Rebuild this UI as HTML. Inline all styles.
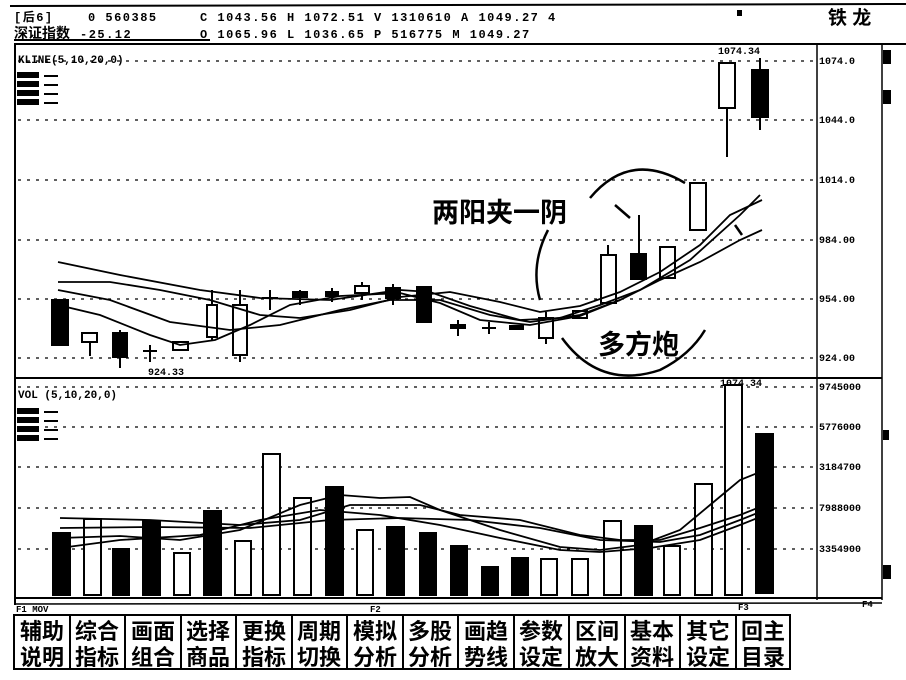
<!DOCTYPE html>
<html><head><meta charset="utf-8"><style>
html,body{margin:0;padding:0;background:#fff;}
svg{display:block}
text{font-family:"Liberation Mono","Noto Sans CJK SC",monospace;font-weight:bold;fill:#000}
.c{font-family:"Liberation Sans","Noto Sans CJK SC",sans-serif;font-weight:bold}
</style></head><body>
<svg width="906" height="680" viewBox="0 0 906 680" xmlns="http://www.w3.org/2000/svg">
<rect width="906" height="680" fill="#fff"/>
<!-- header -->
<line x1="10" y1="6" x2="906" y2="4" stroke="#000" stroke-width="2"/>
<g font-size="12" letter-spacing="1.5">
<text x="14" y="21">[后6]</text><text x="88" y="21">0 560385</text>
<text x="200" y="21">C 1043.56 H 1072.51 V 1310610 A 1049.27 4</text>
<text x="80" y="38">-25.12</text>
<text x="200" y="38">O 1065.96 L 1036.65 P  516775 M 1049.27</text>
</g>
<text x="14" y="38" font-size="14" class="c">深证指数</text>
<text x="828" y="24" font-size="19" class="c">铁 龙</text>
<rect x="737" y="10" width="5" height="6" fill="#000"/>
<line x1="14" y1="40" x2="210" y2="40" stroke="#000" stroke-width="2"/>
<!-- frame -->
<line x1="14" y1="44" x2="906" y2="44" stroke="#000" stroke-width="2"/>
<line x1="15" y1="44" x2="15" y2="605" stroke="#000" stroke-width="2"/>
<line x1="817" y1="44" x2="817" y2="600" stroke="#000" stroke-width="1.5"/>
<line x1="882" y1="44" x2="882" y2="600" stroke="#000" stroke-width="1.5"/>
<line x1="15" y1="378" x2="882" y2="378" stroke="#000" stroke-width="2"/>
<line x1="15" y1="598" x2="882" y2="598" stroke="#000" stroke-width="2"/>
<line x1="15" y1="604" x2="882" y2="603" stroke="#000" stroke-width="1.5"/>
<rect x="883" y="50" width="8" height="14" fill="#000"/>
<rect x="883" y="90" width="8" height="14" fill="#000"/>
<rect x="883" y="565" width="8" height="14" fill="#000"/>
<rect x="883" y="430" width="6" height="10" fill="#000"/>
<!-- grid -->
<g stroke="#000" stroke-width="1.2" stroke-dasharray="3,6">
<line x1="18" y1="61" x2="817" y2="61"/><line x1="18" y1="120" x2="817" y2="120"/>
<line x1="18" y1="180" x2="817" y2="180"/><line x1="18" y1="240" x2="817" y2="240"/>
<line x1="18" y1="299" x2="817" y2="299"/><line x1="18" y1="358" x2="817" y2="358"/>
<line x1="18" y1="387" x2="817" y2="387"/><line x1="18" y1="427" x2="817" y2="427"/>
<line x1="18" y1="467" x2="817" y2="467"/><line x1="18" y1="508" x2="817" y2="508"/>
<line x1="18" y1="549" x2="817" y2="549"/>
</g>
<g font-size="10">
<text x="819" y="64">1074.0</text><text x="819" y="123">1044.0</text>
<text x="819" y="183">1014.0</text><text x="819" y="243">984.00</text>
<text x="819" y="302">954.00</text><text x="819" y="361">924.00</text>
<text x="819" y="390">9745000</text><text x="819" y="430">5776000</text>
<text x="819" y="470">3184700</text><text x="819" y="511">7988000</text>
<text x="819" y="552">3354900</text>
<text x="718" y="54">1074.34</text><text x="720" y="386">1074.34</text>
<text x="148" y="375">924.33</text>
<text x="18" y="63" font-size="11">KLINE(5,10,20,0)</text>
<text x="18" y="398" font-size="11">VOL (5,10,20,0)</text>
<text x="16" y="612" font-size="9">F1 MOV</text>
</g>
<!-- legends -->
<g fill="#000">
<rect x="17" y="72" width="22" height="6"/><rect x="17" y="81" width="22" height="6"/><rect x="17" y="90" width="22" height="6"/><rect x="17" y="99" width="22" height="6"/>
<rect x="44" y="75" width="14" height="2"/><rect x="44" y="84" width="14" height="2"/><rect x="44" y="93" width="14" height="2"/><rect x="44" y="102" width="14" height="2"/>
<rect x="17" y="408" width="22" height="6"/><rect x="17" y="417" width="22" height="6"/><rect x="17" y="426" width="22" height="6"/><rect x="17" y="435" width="22" height="6"/>
<rect x="44" y="411" width="14" height="2"/><rect x="44" y="420" width="14" height="2"/><rect x="44" y="429" width="14" height="2"/><rect x="44" y="438" width="14" height="2"/>
</g>
<!-- candles -->
<g stroke="#000" stroke-width="2" fill="#000">
<rect x="52" y="300" width="16" height="45"/>
<line x1="90" y1="340" x2="90" y2="356"/><rect x="82" y="333" width="15" height="9" fill="#fff"/>
<line x1="120" y1="330" x2="120" y2="368"/><rect x="113" y="333" width="14" height="24"/>
<line x1="150" y1="345" x2="150" y2="362"/><line x1="143" y1="351" x2="157" y2="351"/>
<rect x="173" y="342" width="15" height="8" fill="#fff"/>
<line x1="212" y1="290" x2="212" y2="340"/><rect x="207" y="305" width="10" height="32" fill="#fff"/>
<line x1="240" y1="290" x2="240" y2="362"/><rect x="233" y="305" width="14" height="50" fill="#fff"/>
<line x1="270" y1="290" x2="270" y2="310"/><line x1="262" y1="298" x2="278" y2="298"/>
<line x1="300" y1="290" x2="300" y2="305"/><rect x="293" y="292" width="14" height="5"/>
<line x1="332" y1="288" x2="332" y2="302"/><rect x="326" y="292" width="12" height="4"/>
<line x1="362" y1="282" x2="362" y2="300"/><rect x="355" y="286" width="14" height="7" fill="#fff"/>
<line x1="393" y1="284" x2="393" y2="305"/><rect x="386" y="288" width="14" height="10"/>
<rect x="417" y="287" width="14" height="35"/>
<line x1="458" y1="320" x2="458" y2="336"/><rect x="451" y="325" width="14" height="3"/>
<line x1="489" y1="322" x2="489" y2="334"/><line x1="482" y1="328" x2="496" y2="328"/>
<rect x="510" y="326" width="13" height="3"/>
<line x1="546" y1="312" x2="546" y2="344"/><rect x="539" y="318" width="14" height="20" fill="#fff"/>
<rect x="573" y="311" width="14" height="7" fill="#fff"/>
<rect x="601" y="255" width="15" height="48" fill="#fff"/><line x1="608" y1="245" x2="608" y2="255"/>
<line x1="639" y1="215" x2="639" y2="280"/><rect x="631" y="254" width="15" height="25"/>
<rect x="660" y="247" width="15" height="31" fill="#fff"/>
<rect x="690" y="183" width="16" height="47" fill="#fff"/>
<line x1="727" y1="108" x2="727" y2="157"/><rect x="719" y="63" width="16" height="45" fill="#fff"/>
<line x1="760" y1="58" x2="760" y2="130"/><rect x="752" y="70" width="16" height="47"/>
</g>
<!-- MA lines main -->
<g fill="none" stroke="#000" stroke-width="1.8">
<polyline points="58,262 120,275 200,290 260,298 330,300 400,290 430,292 470,306 520,320 560,318 600,305 640,290 690,260 740,215 760,195"/>
<polyline points="58,305 100,315 150,335 180,345 215,340 250,325 290,305 340,296 400,293 440,303 480,320 530,325 580,316 620,300 660,280 700,262 740,240 762,230"/>
<polyline points="58,282 110,282 160,290 210,300 260,315 300,318 350,310 400,297 450,292 500,302 540,312 580,306 620,292 660,272 700,245 730,215 762,200"/>
<polyline points="58,290 110,300 170,322 230,330 280,325 340,310 390,300 440,300 490,315 530,322 580,315 620,300"/>
</g>
<!-- annotations -->
<text x="432" y="222" font-size="27" class="c">两阳夹一阴</text>
<text x="598" y="354" font-size="27" class="c">多方炮</text>
<g fill="none" stroke="#000" stroke-width="2.5">
<path d="M590,198 Q630,150 685,183"/>
<path d="M548,230 Q530,265 540,300"/>
<path d="M562,338 Q600,390 660,370 Q690,355 705,330"/>
<path d="M615,205 L630,218"/><path d="M742,235 L735,225"/>
</g>
<!-- volume bars -->
<g stroke="#000" stroke-width="2" fill="#000">
<rect x="53" y="533" width="17" height="62"/>
<rect x="84" y="519" width="17" height="76" fill="#fff"/>
<rect x="113" y="549" width="16" height="46"/>
<rect x="143" y="521" width="17" height="74"/>
<rect x="174" y="553" width="16" height="42" fill="#fff"/>
<rect x="204" y="511" width="17" height="84"/>
<rect x="235" y="541" width="16" height="54" fill="#fff"/>
<rect x="263" y="454" width="17" height="141" fill="#fff"/>
<rect x="294" y="498" width="17" height="97" fill="#fff"/>
<rect x="326" y="487" width="17" height="108"/>
<rect x="357" y="530" width="16" height="65" fill="#fff"/>
<rect x="387" y="527" width="17" height="68"/>
<rect x="420" y="533" width="16" height="62"/>
<rect x="451" y="546" width="16" height="49"/>
<rect x="482" y="567" width="16" height="28"/>
<rect x="512" y="558" width="16" height="37"/>
<rect x="541" y="559" width="16" height="36" fill="#fff"/>
<rect x="572" y="559" width="16" height="36" fill="#fff"/>
<rect x="604" y="521" width="17" height="74" fill="#fff"/>
<rect x="635" y="526" width="17" height="69"/>
<rect x="664" y="546" width="16" height="49" fill="#fff"/>
<rect x="695" y="484" width="17" height="111" fill="#fff"/>
<rect x="725" y="385" width="17" height="210" fill="#fff"/>
<rect x="756" y="434" width="17" height="159"/>
</g>
<g fill="none" stroke="#000" stroke-width="1.8">
<polyline points="60,538 120,536 180,540 240,530 300,505 340,495 380,498 410,497 440,510 500,530 560,547 600,550 640,545 680,530 710,505 740,480 765,470"/>
<polyline points="60,518 150,520 240,525 300,520 350,505 420,505 460,515 520,520 580,535 620,540 660,540 700,528 740,515 765,505"/>
<polyline points="60,528 150,527 250,528 330,520 400,518 470,520 540,528 600,540 660,542 700,535 740,520 765,510"/>
<polyline points="60,548 120,540 200,535 260,520 320,510 380,515 440,525 500,538 560,550 600,552 650,548 700,540 740,525 765,515"/>
</g>
<!-- bottom marks -->
<text x="370" y="612" font-size="9">F2</text>
<text x="738" y="610" font-size="9">F3</text>
<text x="862" y="607" font-size="9">F4</text>
<!-- buttons -->
<g stroke="#000" stroke-width="2" fill="#fff">
<rect x="14" y="615" width="776" height="54"/>
</g>
<g stroke="#000" stroke-width="2">
<line x1="70" y1="615" x2="70" y2="669"/><line x1="125" y1="615" x2="125" y2="669"/>
<line x1="181" y1="615" x2="181" y2="669"/><line x1="236" y1="615" x2="236" y2="669"/>
<line x1="292" y1="615" x2="292" y2="669"/><line x1="347" y1="615" x2="347" y2="669"/>
<line x1="403" y1="615" x2="403" y2="669"/><line x1="458" y1="615" x2="458" y2="669"/>
<line x1="514" y1="615" x2="514" y2="669"/><line x1="569" y1="615" x2="569" y2="669"/>
<line x1="625" y1="615" x2="625" y2="669"/><line x1="680" y1="615" x2="680" y2="669"/>
<line x1="736" y1="615" x2="736" y2="669"/>
</g>
<g font-size="22" class="c" text-anchor="middle">
<text x="42" y="639">辅助</text><text x="42" y="665">说明</text>
<text x="97" y="639">综合</text><text x="97" y="665">指标</text>
<text x="153" y="639">画面</text><text x="153" y="665">组合</text>
<text x="208" y="639">选择</text><text x="208" y="665">商品</text>
<text x="264" y="639">更换</text><text x="264" y="665">指标</text>
<text x="319" y="639">周期</text><text x="319" y="665">切换</text>
<text x="375" y="639">模拟</text><text x="375" y="665">分析</text>
<text x="430" y="639">多股</text><text x="430" y="665">分析</text>
<text x="486" y="639">画趋</text><text x="486" y="665">势线</text>
<text x="541" y="639">参数</text><text x="541" y="665">设定</text>
<text x="597" y="639">区间</text><text x="597" y="665">放大</text>
<text x="652" y="639">基本</text><text x="652" y="665">资料</text>
<text x="708" y="639">其它</text><text x="708" y="665">设定</text>
<text x="763" y="639">回主</text><text x="763" y="665">目录</text>
</g>
</svg>
</body></html>
